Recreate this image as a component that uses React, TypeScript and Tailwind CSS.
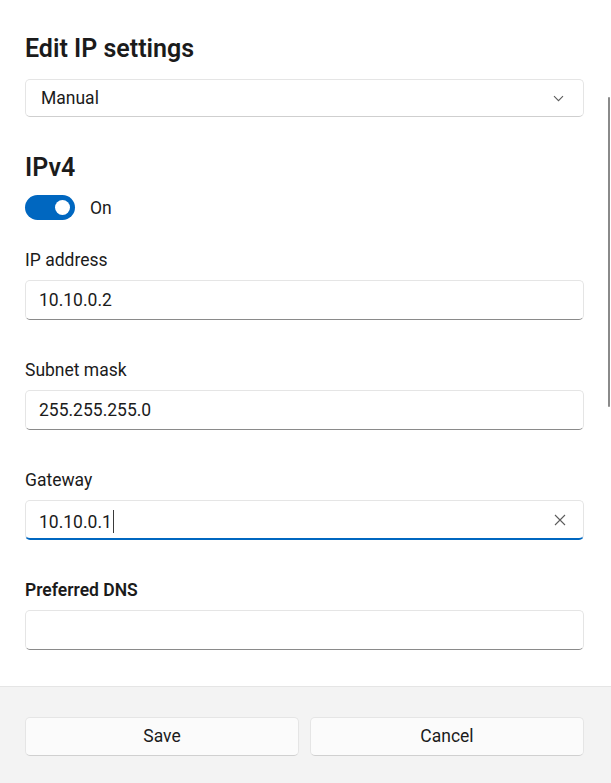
import type { ReactNode } from 'react'

const font = { fontFamily: 'Roboto, "Noto Sans", sans-serif' }

interface FieldProps {
  label: string
  value?: string
  bold?: boolean
  focused?: boolean
  className?: string
}

function Field({ label, value, bold, focused, className }: FieldProps) {
  return (
    <div className={className}>
      <div className={`h-[24px] text-[17.5px] leading-[24px] text-[#1b1b1b] ${bold ? 'font-semibold' : ''}`}>
        {label}
      </div>
      <div
        className={`mt-[8px] flex h-[40px] items-center rounded-[5px] border border-[#e5e5e5] bg-white pl-[13px] pr-[16px] ${
          focused ? 'border-b-2 border-b-[#0067c0]' : 'border-b-[#8a8a8a]'
        }`}
      >
        <span className="flex-1 text-[17.5px] leading-[24px] text-[#1b1b1b]">
          {value}
          {focused && <span className="ml-[1px] inline-block h-[23px] w-[1.5px] translate-y-[5px] bg-[#3a3a3a]" />}
        </span>
        {focused && (
          <svg width="12" height="12" viewBox="0 0 12 12" className="mr-[1px]">
            <path d="M1 1 L11 11 M11 1 L1 11" stroke="#5c5c5c" strokeWidth="1.1" fill="none" />
          </svg>
        )}
      </div>
    </div>
  )
}

function Button({ children }: { children: ReactNode }) {
  return (
    <button className="flex h-[39px] flex-1 items-center justify-center rounded-[5px] border border-[#e5e5e5] border-b-[#d0d0d0] bg-[#fbfbfb] text-[17.5px] text-[#1b1b1b]">
      {children}
    </button>
  )
}

export default function App() {
  return (
    <div className="relative flex h-[783px] w-[611px] flex-col bg-white" style={font}>
      <div className="flex-1 overflow-hidden pl-[25px] pr-[27px] pt-[33px]">
        <h1 className="h-[32px] text-[25px] font-semibold leading-[32px] text-[#1b1b1b]">Edit IP settings</h1>

        <div className="mt-[14px] flex h-[38px] items-center rounded-[5px] border border-[#e5e5e5] border-b-[#cfcfcf] bg-white pl-[15px] pr-[19px]">
          <span className="flex-1 text-[17.5px] text-[#1b1b1b]">Manual</span>
          <svg width="11" height="7" viewBox="0 0 11 7">
            <path d="M1 1.2 L5.5 5.7 L10 1.2" stroke="#5c5c5c" strokeWidth="1.1" fill="none" />
          </svg>
        </div>

        <h2 className="mt-[34px] h-[34px] text-[25px] font-semibold leading-[34px] text-[#1b1b1b]">IPv4</h2>

        <div className="mt-[10px] flex h-[25px] items-center gap-[15px]">
          <div className="flex h-[25px] w-[50px] items-center justify-end rounded-full bg-[#0067c0] pr-[5px]">
            <div className="h-[15px] w-[15px] rounded-full bg-white" />
          </div>
          <span className="translate-y-[1px] text-[17.5px] text-[#1b1b1b]">On</span>
        </div>

        <Field className="mt-[28px]" label="IP address" value="10.10.0.2" />
        <Field className="mt-[38px]" label="Subnet mask" value="255.255.255.0" />
        <Field className="mt-[38px]" label="Gateway" value="10.10.0.1" focused />
        <Field className="mt-[38px]" label="Preferred DNS" bold />
      </div>

      <div className="absolute right-[1px] top-[97px] h-[310px] w-[2px] rounded-full bg-[#8a8a8a]" />

      <footer className="flex h-[97px] gap-[11px] border-t border-[#e5e5e5] bg-[#f3f3f3] pl-[25px] pr-[27px] pt-[30px]">
        <Button>Save</Button>
        <Button>Cancel</Button>
      </footer>
    </div>
  )
}
